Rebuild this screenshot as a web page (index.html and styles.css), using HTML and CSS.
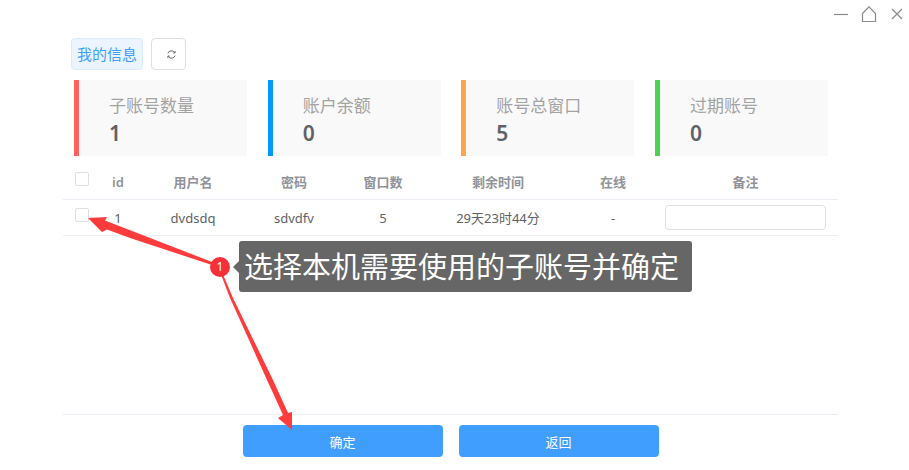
FILE: index.html
```html
<!doctype html>
<html lang="en">
<head>
	<meta charset="UTF-8">
	<title>我的信息</title>
	<link rel="stylesheet" href="styles.css">
</head>
<body>
	<div class="titlebar">
		<svg class="win-icon" width="72" height="24" viewBox="0 0 72 24" fill="none" stroke="#8a8a8a" stroke-width="1.2">
			<path d="M1 14.500H15"/>
			<path d="M29.500 13.500L36 6.800L42.500 13.500V21.500H29.500Z"/>
			<path d="M59 9L69 19M69 9L59 19"/>
		</svg>
	</div>
	<div class="main">
		<div class="tabs">
			<span class="tag">我的信息</span>
			<button class="refresh">
				<svg width="11" height="11" viewBox="0 0 14 14" fill="none" stroke="#606266" stroke-width="1.200">
					<path d="M2.400 5.600A4.800 4.800 0 0 1 11 4.400"/>
					<path d="M11.600 8.400A4.800 4.800 0 0 1 3 9.600"/>
					<path d="M11.600 2.600V5H9.200"/>
					<path d="M2.400 11.400V9H4.800"/>
				</svg>
			</button>
		</div>
		<div class="stats">
			<div class="stat red">
				<div class="stat-label">子账号数量</div>
				<div class="stat-num">1</div>
			</div>
			<div class="stat blue">
				<div class="stat-label">账户余额</div>
				<div class="stat-num">0</div>
			</div>
			<div class="stat orange">
				<div class="stat-label">账号总窗口</div>
				<div class="stat-num">5</div>
			</div>
			<div class="stat green">
				<div class="stat-label">过期账号</div>
				<div class="stat-num">0</div>
			</div>
		</div>
		<div class="table">
			<div class="row head">
				<span><i class="check"></i></span>
				<span>id</span>
				<span>用户名</span>
				<span>密码</span>
				<span>窗口数</span>
				<span>剩余时间</span>
				<span>在线</span>
				<span>备注</span>
			</div>
			<div class="row">
				<span><i class="check"></i></span>
				<span>1</span>
				<span>dvdsdq</span>
				<span>sdvdfv</span>
				<span>5</span>
				<span>29天23时44分</span>
				<span>-</span>
				<span><input class="note" type="text"></span>
			</div>
		</div>
		<div class="footer">
			<button class="btn">确定</button>
			<button class="btn">返回</button>
		</div>
	</div>

	<!-- 标注层 -->
	<svg class="arrows" width="909" height="470" viewBox="0 0 909 470">
		<path fill="#ff3b3b" d="M88 218L107 217L105 220.500L212 262L212 265L130 238L107 229.500L102 232Z"/>
		<path fill="#ff3b3b" d="M292 430L278 418L283 415L267 380L230 298L220 272L222 272L233 298L273 380L288 413L292 412Z"/>
	</svg>
	<div class="badge">1</div>
	<div class="tip">选择本机需要使用的子账号并确定</div>
</body>
</html>
```

FILE: styles.css
```css
* {
	box-sizing: border-box;
}
body {
	position: relative;
	margin: 0;
	width: 909px;
	height: 470px;
	overflow: hidden;
	background-color: #fff;
	font-family: "Noto Sans", "Noto Sans CJK SC", sans-serif;
	font-size: 13px;
	color: #606266;
}
.titlebar {
	display: flex;
	justify-content: flex-end;
	height: 38px;
	padding-right: 4px;
}
.win-icon {
	display: block;
}
.main {
	display: flex;
	flex-direction: column;
	width: 775px;
	height: 433px;
	margin-left: 63px;
}
.tabs {
	display: flex;
	gap: 8px;
	height: 32px;
	margin-left: 8px;
}
.tag {
	width: 72px;
	line-height: 30px;
	text-align: center;
	font-size: 15px;
	color: #409eff;
	background-color: #ecf5ff;
	border: 1px solid #d9ecff;
	border-radius: 4px;
}
.refresh {
	display: flex;
	align-items: center;
	justify-content: center;
	width: 35px;
	padding: 0 0 0 5px;
	background-color: #fff;
	border: 1px solid #dcdfe6;
	border-radius: 4px;
}
.stats {
	display: flex;
	justify-content: space-between;
	width: 754px;
	margin: 10px 0 0 11px;
}
.stat {
	width: 173px;
	height: 76px;
	padding: 13px 0 0 30px;
	background-color: #f9f9f9;
	border-left: 5px solid #ccc;
}
.red {
	border-left-color: #ff6161;
}
.blue {
	border-left-color: #0098ff;
}
.orange {
	border-left-color: #ffa64d;
}
.green {
	border-left-color: #4fd152;
}
.stat-label {
	font-size: 17px;
	line-height: 26px;
	color: #a3a3a3;
}
.stat-num {
	font-size: 21px;
	line-height: 28px;
	font-weight: 600;
	color: #606266;
}
.table {
	flex: 1;
	margin-top: 8px;
}
.row {
	display: grid;
	grid-template-columns: 38px 34px 116px 86px 92px 138px 92px 173px;
	align-items: center;
	height: 36px;
	text-align: center;
	border-bottom: 1px solid #ebeef5;
}
.row.head {
	height: 36px;
	font-weight: 600;
	color: #909399;
}
.check {
	display: block;
	width: 14px;
	height: 14px;
	margin: 0 auto 6px;
	background-color: #fff;
	border: 1px solid #dcdfe6;
	border-radius: 2px;
}
.note {
	display: block;
	width: 161px;
	height: 25px;
	margin: 0 auto;
	background-color: #fff;
	border: 1px solid #dcdfe6;
	border-radius: 4px;
}
.footer {
	display: flex;
	justify-content: center;
	gap: 16px;
	height: 57px;
	padding-top: 10px;
	border-top: 1px solid #ebeef5;
}
.btn {
	width: 200px;
	height: 32px;
	padding: 0;
	font-family: inherit;
	font-size: 13px;
	color: #fff;
	background-color: #409eff;
	border: 0;
	border-radius: 4px;
}
.arrows {
	position: absolute;
	left: 0;
	top: 0;
}
.badge {
	position: absolute;
	left: 210px;
	top: 257px;
	width: 20px;
	height: 20px;
	line-height: 20px;
	text-align: center;
	font-size: 12px;
	color: #fff;
	background-color: #f5303a;
	border-radius: 50%;
}
.tip {
	position: absolute;
	left: 239px;
	top: 241px;
	width: 453px;
	height: 51px;
	padding-left: 5px;
	line-height: 52px;
	white-space: nowrap;
	font-size: 29px;
	color: #fff;
	background-color: #666;
	border-radius: 3px;
}
.tip::before {
	content: "";
	position: absolute;
	left: -6px;
	top: 20px;
	border-style: solid;
	border-width: 6px 6px 6px 0;
	border-color: transparent #666 transparent transparent;
}
```
